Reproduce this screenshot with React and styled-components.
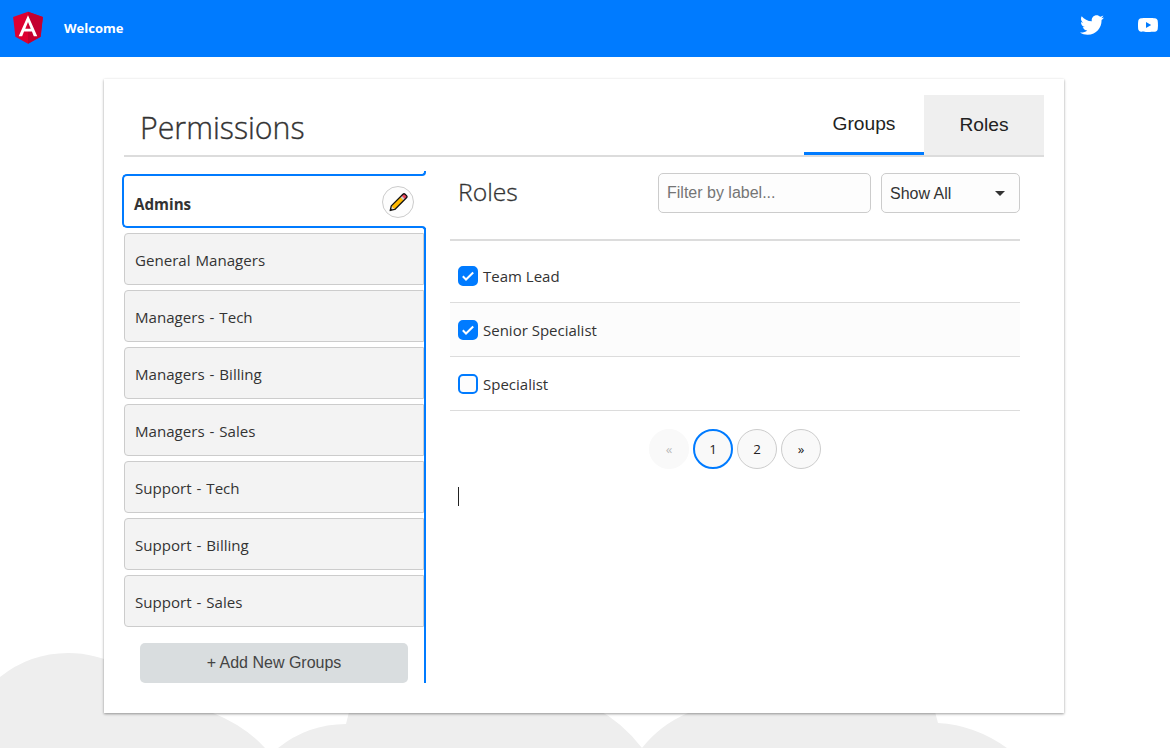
import React from "react";
import styled, { createGlobalStyle, css } from "styled-components";
import { FaTwitter } from "react-icons/fa";

const BLUE = "#007bff";
const UI = `"Open Sans", "Noto Sans", sans-serif`;
const ARIAL = `"Liberation Sans", Arial, sans-serif`;

const Global = createGlobalStyle`
  *, *::before, *::after { box-sizing: border-box; }
  body { margin: 0; background: #fff; color: #333; font-family: ${UI}; }
  button, input { font: inherit; }
`;

const Page = styled.div`
  position: relative;
  height: 748px;
  overflow: hidden;
`;

const Clouds = styled.svg`
  position: absolute;
  left: 0;
  bottom: 0;
  fill: #eee;
`;

const Navbar = styled.header`
  position: relative;
  display: flex;
  align-items: flex-start;
  height: 57px;
  padding: 7px 10px 0 8px;
  background: ${BLUE};
  color: #fff;
`;

const Welcome = styled.span`
  margin-left: 16px;
  font-size: 13px;
  font-weight: 700;
  line-height: 42px;
`;

const Social = styled.nav`
  display: flex;
  gap: 32px;
  margin: 6px 0 0 auto;
`;

const Card = styled.main`
  position: relative;
  width: 960px;
  height: 634px;
  margin: 22px 0 0 104px;
  padding: 16px 20px 0;
  background: #fff;
  box-shadow: 0 1px 3px rgba(0, 0, 0, 0.22), 0 1px 2px rgba(0, 0, 0, 0.2);
`;

const CardHeader = styled.div`
  display: flex;
  justify-content: space-between;
  height: 62px;
  border-bottom: 2px solid #dcdcdc;
`;

const Title = styled.h1`
  margin: 0;
  padding-left: 16px;
  font-size: 30.3px;
  font-weight: 300;
  line-height: 66px;
  -webkit-text-stroke: 0.35px #333;
`;

const Tabs = styled.div`
  display: flex;
`;

const Tab = styled.button`
  width: 120px;
  height: 60px;
  padding: 0;
  border: 0;
  border-bottom: ${(p) => (p.$active ? `3px solid ${BLUE}` : "0")};
  background: ${(p) => (p.$active ? "#fff" : "#efefef")};
  color: #222;
  font: 19.2px ${ARIAL};
`;

const Body = styled.div`
  display: flex;
  gap: 24px;
  padding-top: 15px;
`;

const GroupColumn = styled.div`
  width: 302px;
  padding-top: 2px;
`;

const ActiveGroup = styled.div`
  position: relative;
  display: flex;
  align-items: center;
  width: 300px;
  height: 54px;
  margin-left: -2px;
  padding-left: 10px;
  border: 2px solid ${BLUE};
  border-right: 0;
  border-radius: 5px 0 0 5px;
  font-size: 15.2px;
  font-weight: 700;

  &::before,
  &::after {
    content: "";
    position: absolute;
    left: 100%;
    width: 4px;
    height: 5px;
    border-right: 2px solid ${BLUE};
  }
  &::before {
    top: -5px;
    border-bottom: 2px solid ${BLUE};
    border-bottom-right-radius: 4px;
  }
  &::after {
    bottom: -5px;
    border-top: 2px solid ${BLUE};
    border-top-right-radius: 4px;
  }
`;

const GroupName = styled.span`
  padding-top: 5px;
`;

const EditButton = styled.button`
  display: grid;
  place-items: center;
  width: 32px;
  height: 32px;
  margin: 2px 8px 0 auto;
  padding: 0;
  border: 1px solid #ccc;
  border-radius: 50%;
  background: #fdfdfd;
`;

const GroupList = styled.div`
  display: flex;
  flex-direction: column;
  gap: 5px;
  height: 455px;
  padding-top: 5px;
  border-right: 2px solid ${BLUE};
`;

const Group = styled.div`
  height: 52px;
  padding: 1px 10px 0;
  border: 1px solid #ccc;
  border-radius: 4px 0 0 4px;
  background: #f3f3f3;
  font-size: 15.1px;
  line-height: 50px;
  word-spacing: 1px;
`;

const AddButton = styled.button`
  height: 40px;
  margin: 11px 16px 0;
  border: 0;
  border-radius: 5px;
  background: #d9dddf;
  color: #444;
  font: 16px ${ARIAL};
`;

const RolesPanel = styled.section`
  width: 570px;
`;

const RolesHeader = styled.div`
  display: flex;
  gap: 10px;
  height: 69px;
  padding: 1px 0 0 8px;
  border-bottom: 2px solid #dcdcdc;
`;

const RolesTitle = styled.h2`
  flex: 1;
  margin: 0;
  font-size: 24.7px;
  font-weight: 300;
  line-height: 37px;
  -webkit-text-stroke: 0.3px #333;
`;

const field = css`
  height: 40px;
  padding: 0 8px;
  border: 1px solid #ccc;
  border-radius: 5px;
  background: #fdfdfd;
  font: 16px ${ARIAL};
`;

const FilterInput = styled.input`
  ${field}
  width: 213px;
  &::placeholder { color: #757575; }
`;

const Select = styled.div`
  ${field}
  display: flex;
  align-items: center;
  justify-content: space-between;
  width: 139px;
  padding: 2px 14px 0 8px;
`;

const Caret = styled.span`
  margin-bottom: 1px;
  border: 5px solid transparent;
  border-top-color: #333;
  border-bottom: 0;
`;

const RoleList = styled.div`
  padding-top: 8px;
`;

const RoleRow = styled.label`
  display: flex;
  align-items: center;
  gap: 5px;
  height: 54px;
  padding-left: 8px;
  border-bottom: 1px solid #dcdcdc;
  background: ${(p) => (p.$shaded ? "#fcfcfc" : "#fff")};
  font-size: 15px;
`;

const CheckBox = styled.span`
  display: grid;
  place-items: center;
  width: 20px;
  height: 20px;
  border: 2px solid ${BLUE};
  border-radius: 5px;
  background: ${(p) => (p.$checked ? BLUE : "#fdfdfd")};
`;

const Pagination = styled.div`
  display: flex;
  justify-content: center;
  gap: 4px;
  margin-top: 18px;
`;

const PageButton = styled.button`
  width: 40px;
  height: 40px;
  padding: 0;
  border: ${(p) => (p.$current ? `2px solid ${BLUE}` : p.disabled ? "1px solid #f9f9f9" : "1px solid #ccc")};
  border-radius: 50%;
  background: #f9f9f9;
  color: ${(p) => (p.disabled ? "#bbb" : "#222")};
  font-size: 13.3px;
`;

const TextCursor = styled.div`
  width: 1px;
  height: 19px;
  margin: 18px 0 0 8px;
  background: #222;
`;

const AngularLogo = () => (
  <svg width="40" height="40" viewBox="0 0 250 250">
    <path fill="#dd0031" d="M125 30 31.9 63.2l14.2 123.1L125 230l78.9-43.7 14.2-123.1z" />
    <path fill="#c3002f" d="M125 30v200l78.9-43.7 14.2-123.1z" />
    <path
      fill="#fff"
      d="M125 52.1 66.8 182.6h21.7l11.7-29.2h49.4l11.7 29.2H183zm17 83.3h-34l17-40.9z"
    />
  </svg>
);

const YoutubeIcon = () => (
  <svg width="24" height="24" viewBox="0 0 24 24" fill="#fff">
    <path d="M21.58 7.19c-.23-.86-.91-1.54-1.77-1.77C18.25 5 12 5 12 5s-6.25 0-7.81.42c-.86.23-1.54.91-1.77 1.77C2 8.75 2 12 2 12s0 3.25.42 4.81c.23.86.91 1.54 1.77 1.77C5.75 19 12 19 12 19s6.25 0 7.81-.42c.86-.23 1.54-.91 1.77-1.77C22 15.25 22 12 22 12s0-3.25-.42-4.81zM10 15V9l5.2 3z" />
  </svg>
);

const PencilIcon = () => (
  <svg width="20" height="20" viewBox="0 0 20 20">
    <g transform="rotate(-45 10 10)">
      <path d="M-1.5 10.5 2.5 8v5z" fill="#e6d5c8" />
      <path d="M2.5 8h13v5h-13z" fill="#ffb900" />
      <path d="M15 8h2v5h-2z" fill="#ccc" />
      <path d="M17 8h2a1.500 1.500 0 0 1 1.500 1.500v2a1.500 1.500 0 0 1-1.500 1.500H17z" fill="#e8455a" />
      <path
        d="M-1.500 10.500 2.500 8H19a1.500 1.500 0 0 1 1.500 1.500v2A1.500 1.500 0 0 1 19 13H2.500z"
        fill="none"
        stroke="#111"
        strokeWidth="1.3"
        strokeLinejoin="round"
      />
      <path d="M-1.500 10.500 .3 9.300v2.400z" fill="#111" />
    </g>
  </svg>
);

const CheckMark = () => (
  <svg width="14" height="14" viewBox="0 0 14 14" fill="none" stroke="#fff" strokeWidth="2">
    <path d="M1.800 7.300 5 10.500l7.200-7" />
  </svg>
);

const groups = [
  "General Managers",
  "Managers - Tech",
  "Managers - Billing",
  "Managers - Sales",
  "Support - Tech",
  "Support - Billing",
  "Support - Sales",
];

const roles = [
  { name: "Team Lead", checked: true },
  { name: "Senior Specialist", checked: true },
  { name: "Specialist", checked: false },
];

export default function App() {
  return (
    <Page>
      <Global />
      <Clouds width="1170" height="100" viewBox="0 648 1170 100">
        <path d="M0 677Q30 653 68 653C105 653 140 672 165 700Q190 702 213 713Q245 726 265 748H0z" />
        <path d="M278 748Q308 724 346 724L350 708H595Q622 722 642 748z" />
        <path d="M642 748Q660 725 688 713L700 708H934L938 723Q975 725 1007 748z" />
      </Clouds>
      <Navbar>
        <AngularLogo />
        <Welcome>Welcome</Welcome>
        <Social>
          <FaTwitter size={24} color="#fff" />
          <YoutubeIcon />
        </Social>
      </Navbar>
      <Card>
        <CardHeader>
          <Title>Permissions</Title>
          <Tabs>
            <Tab $active>Groups</Tab>
            <Tab>Roles</Tab>
          </Tabs>
        </CardHeader>
        <Body>
          <GroupColumn>
            <ActiveGroup>
              <GroupName>Admins</GroupName>
              <EditButton><PencilIcon /></EditButton>
            </ActiveGroup>
            <GroupList>
              {groups.map((g) => <Group key={g}>{g}</Group>)}
              <AddButton>+ Add New Groups</AddButton>
            </GroupList>
          </GroupColumn>
          <RolesPanel>
            <RolesHeader>
              <RolesTitle>Roles</RolesTitle>
              <FilterInput placeholder="Filter by label..." />
              <Select>Show All<Caret /></Select>
            </RolesHeader>
            <RoleList>
              {roles.map((r, i) => (
                <RoleRow key={r.name} $shaded={i % 2 === 1}>
                  <CheckBox $checked={r.checked}>{r.checked && <CheckMark />}</CheckBox>
                  {r.name}
                </RoleRow>
              ))}
            </RoleList>
            <Pagination>
              <PageButton disabled>«</PageButton>
              <PageButton $current>1</PageButton>
              <PageButton>2</PageButton>
              <PageButton>»</PageButton>
            </Pagination>
            <TextCursor />
          </RolesPanel>
        </Body>
      </Card>
    </Page>
  );
}
